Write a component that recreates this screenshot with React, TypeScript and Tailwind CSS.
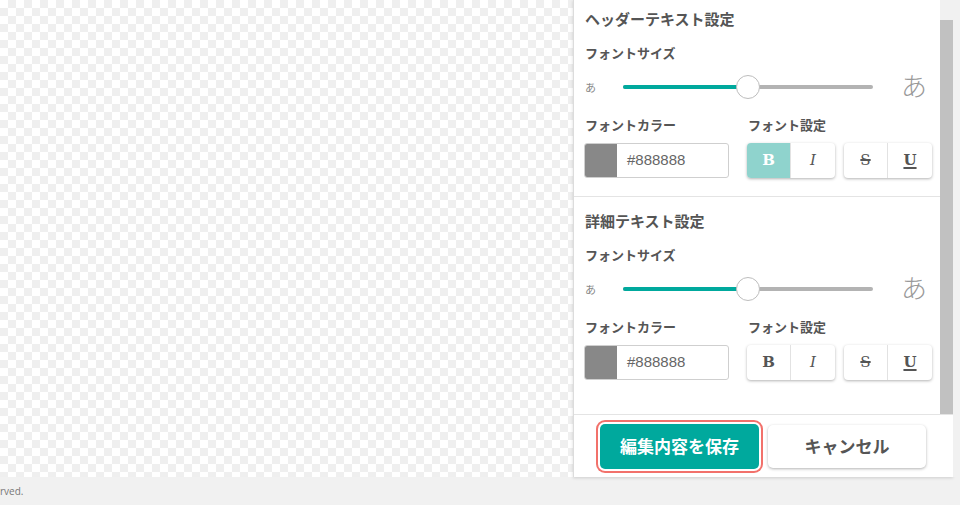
import React from "react"

const jp = "font-['Noto_Sans_CJK_JP','Noto_Sans',sans-serif]"

const FontSizeSlider: React.FC = () => {
    return (
        <div className="flex items-center h-6">
            <span className="w-[38px] text-[11px] leading-none text-[#888]">あ</span>
            <div className="relative w-[250px] h-[4px] rounded-full bg-[#b3b3b3]">
                <div className="absolute left-0 top-0 h-[4px] w-[125px] rounded-l-full bg-[#00a99d]" />
                <div className="absolute left-[113px] top-[-10px] w-6 h-6 rounded-full bg-white border border-[#bdbdbd]" />
            </div>
            <span className="ml-[28px] mb-[5px] text-[26px] leading-none text-[#999] font-light">あ</span>
        </div>
    )
}

interface StyleButtonsProps {
    bold?: boolean
}

const StyleButtons: React.FC<StyleButtonsProps> = (props) => {
    const serif = "font-['DejaVu_Serif',serif] text-[15px] text-[#555]"
    return (
        <div className="flex ml-[18px] gap-[9px]">
            <div className="flex h-[35px] w-[88px] rounded-[4px] overflow-hidden shadow-[0_1px_3px_rgba(0,0,0,0.3)] bg-white">
                <div className={"flex w-[43px] items-center justify-center font-bold " + serif + (props.bold ? " bg-[#8fd3cd] !text-white" : "")}>B</div>
                <div className={"flex flex-1 items-center justify-center italic border-l border-[#e2e2e2] " + serif}>I</div>
            </div>
            <div className="flex h-[35px] w-[88px] rounded-[4px] overflow-hidden shadow-[0_1px_3px_rgba(0,0,0,0.3)] bg-white">
                <div className={"flex w-[43px] items-center justify-center line-through decoration-2 " + serif}>S</div>
                <div className={"flex flex-1 items-center justify-center font-bold underline decoration-2 underline-offset-2 border-l border-[#e2e2e2] " + serif}>U</div>
            </div>
        </div>
    )
}

const ColorRow: React.FC<StyleButtonsProps> = (props) => {
    return (
        <>
            <div className="flex mt-[18px] h-4 items-center text-[13px] font-bold text-[#555]">
                <span className="w-[163px]">フォントカラー</span>
                <span>フォント設定</span>
            </div>
            <div className="flex mt-[10px] -ml-px">
                <div className="flex h-[35px] w-[145px] rounded-[3px] border border-[#cfcfcf] overflow-hidden">
                    <div className="w-[32px] bg-[#888888]" />
                    <div className="flex items-center pl-[10px] text-[15px] text-[#666] font-['Liberation_Sans',sans-serif]">#888888</div>
                </div>
                <StyleButtons bold={props.bold} />
            </div>
        </>
    )
}

export default function App() {
    return (
        <div className={"flex flex-col w-[960px] h-[505px] overflow-hidden bg-[#f1f1f1] " + jp}>
            <div className="flex h-[477px]">
                <div className="w-[573px] bg-white bg-[conic-gradient(#efefef_25%,#ffffff_0_50%,#efefef_0_75%,#ffffff_0)] bg-[length:16px_16px]" />
                <div className="flex flex-col w-[380px] border-l border-[#dcdcdc] bg-white shadow-[0_1px_3px_rgba(0,0,0,0.15)]">
                    <div className="flex h-[415px] border-b border-[#e4e4e4]">
                        <div className="flex-1">
                            <div className="pl-[11px] pt-[9px] pb-[18px] border-b border-[#e4e4e4]">
                                <div className="h-5 flex items-center text-[15px] font-bold text-[#555]">ヘッダーテキスト設定</div>
                                <div className="mt-4 h-4 flex items-center text-[13px] font-bold text-[#555]">フォントサイズ</div>
                                <div className="mt-[14px]"><FontSizeSlider /></div>
                                <ColorRow bold />
                            </div>
                            <div className="pl-[11px] pt-[14px]">
                                <div className="h-5 flex items-center text-[15px] font-bold text-[#555]">詳細テキスト設定</div>
                                <div className="mt-4 h-4 flex items-center text-[13px] font-bold text-[#555]">フォントサイズ</div>
                                <div className="mt-[14px]"><FontSizeSlider /></div>
                                <ColorRow />
                            </div>
                        </div>
                        <div className="flex flex-col w-[13px] bg-[#f1f1f1]">
                            <div className="h-[20px]" />
                            <div className="flex-1 bg-[#c1c1c1]" />
                        </div>
                    </div>
                    <div className="flex flex-1 items-center pl-[26px] gap-[9px]">
                        <button className="h-[45px] w-[159px] rounded-[5px] bg-[#00a99d] text-white text-[17px] font-bold ring-2 ring-[#f2716b] ring-offset-2 shadow-[0_1px_3px_rgba(0,0,0,0.3)]">編集内容を保存</button>
                        <button className="h-[43px] w-[158px] rounded-[5px] bg-white text-[#555] text-[17px] font-bold shadow-[0_1px_3px_rgba(0,0,0,0.3)]">キャンセル</button>
                    </div>
                </div>
                <div className="flex-1 bg-[#f1f1f1]" />
            </div>
            <div className="flex items-center h-[28px] text-[10px] text-[#777] font-['Open_Sans',sans-serif]">rved.</div>
        </div>
    )
}
